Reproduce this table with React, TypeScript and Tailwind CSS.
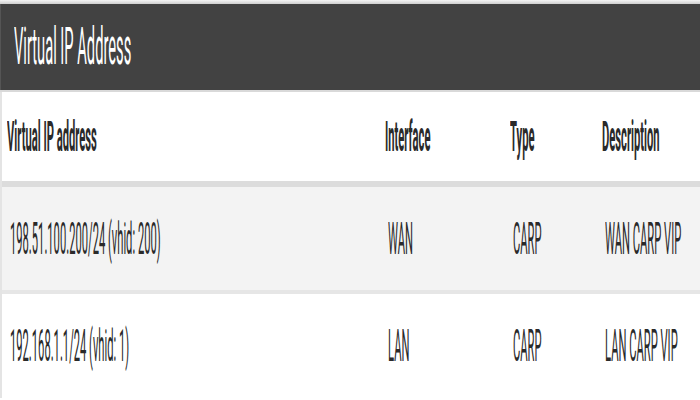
const ROWS = [
  { ip: "198.51.100.200/24 (vhid: 200)", iface: "WAN", type: "CARP", descr: "WAN CARP VIP" },
  { ip: "192.168.1.1/24 (vhid: 1)", iface: "LAN", type: "CARP", descr: "LAN CARP VIP" },
];

const COLS = "grid grid-cols-[378px_125px_92px_1fr]";

export default function App() {
  return (
    <div className="h-[400px] w-[700px] overflow-hidden bg-white font-['Roboto',sans-serif]">
      {/* top shadow strip */}
      <div className="h-1 bg-gradient-to-b from-[#f4f4f4] to-[#cfcfcf]" />

      {/* panel heading */}
      <div className="flex h-[86px] items-center border-l border-[#555] bg-[#424242] px-[13px]">
        <h2 className="inline-block origin-center scale-y-[3.54] text-[14.7px] leading-none font-normal text-white">
          Virtual IP Address
        </h2>
      </div>
      <div className="h-[2px] bg-[#d9d9d9]" />

      {/* table */}
      <div className="border-l-2 border-[#e4e4e4] text-[#2a2a2a]">
        <div className={`${COLS} h-[95px] items-center border-b-[6px] border-[#dcdcdc] bg-white`}>
          {["Virtual IP address", "Interface", "Type", "Description"].map((h) => (
            <div key={h} className="pl-[5px]">
              <span className="inline-block origin-center scale-y-[3.77] text-[11.2px] leading-none font-bold">{h}</span>
            </div>
          ))}
        </div>
        {ROWS.map((r, i) => (
          <div
            key={r.ip}
            className={`${COLS} items-center ${i === 0 ? "h-[107px] border-b-4 border-[#e6e6e6] bg-[#f3f3f3]" : "h-[104px] bg-white"}`}
          >
            {[r.ip, r.iface, r.type, r.descr].map((v, j) => (
              <div key={j} className="pl-[8px]">
                <span className="inline-block origin-center scale-y-[3.9] text-[11.2px] leading-none">{v}</span>
              </div>
            ))}
          </div>
        ))}
      </div>
    </div>
  );
}
